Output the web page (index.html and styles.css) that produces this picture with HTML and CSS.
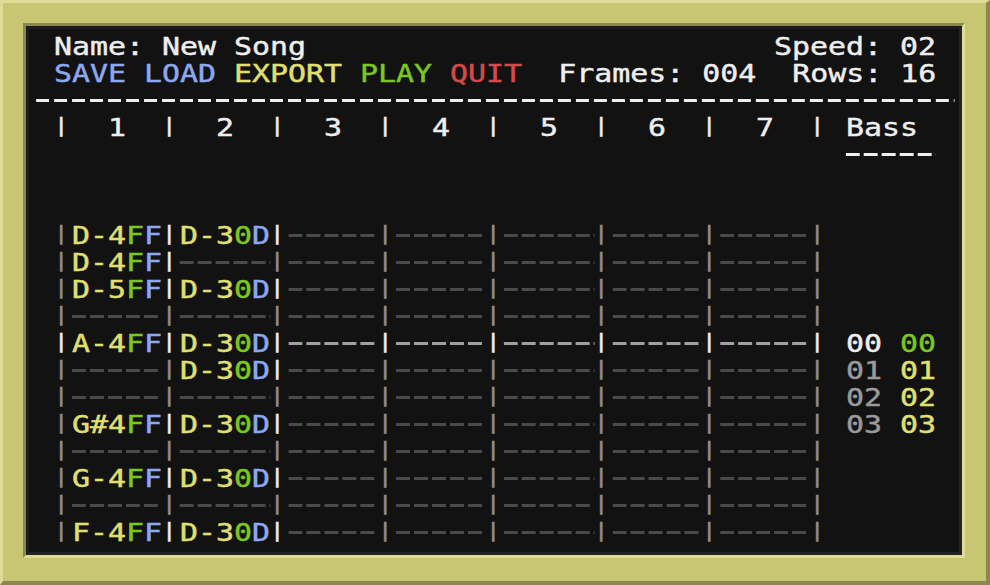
FILE: index.html
```html
<!DOCTYPE html>
<html lang="en">
<head>
<meta charset="utf-8">
<title>Tracker - New Song</title>
<link rel="stylesheet" href="styles.css">
</head>
<body>
<div class="frame">
  <div class="screen">
    <div class="term">
      <div class="text">
      <div class="line split"><span>Name: New Song</span><span>Speed: 02</span></div>
      <div class="line"><span class="blue">SAVE</span> <span class="blue">LOAD</span> <span class="yellow">EXPORT</span> <span class="green">PLAY</span> <span class="red">QUIT</span>  Frames: 004  Rows: 16</div>
      <div class="line"><span class="rule"></span></div>
      <div class="line"><span class="pipe on">|</span>  1  <span class="pipe on">|</span>  2  <span class="pipe on">|</span>  3  <span class="pipe on">|</span>  4  <span class="pipe on">|</span>  5  <span class="pipe on">|</span>  6  <span class="pipe on">|</span>  7  <span class="pipe on">|</span> Bass</div>
      <div class="line"><span class="dash w5 white-dash bass-ul"></span></div>
      <div class="line"></div>
      <div class="line"></div>

      <div class="line"><span class="pipe">|</span><span class="yellow">D-4</span><span class="green">F</span><span class="blue">F</span><span class="pipe on">|</span><span class="yellow">D-3</span><span class="green">0</span><span class="blue">D</span><span class="pipe on">|</span><span class="dash w5"></span><span class="pipe">|</span><span class="dash w5"></span><span class="pipe">|</span><span class="dash w5"></span><span class="pipe">|</span><span class="dash w5"></span><span class="pipe">|</span><span class="dash w5"></span><span class="pipe">|</span></div>

      <div class="line"><span class="pipe">|</span><span class="yellow">D-4</span><span class="green">F</span><span class="blue">F</span><span class="pipe on">|</span><span class="dash w5"></span><span class="pipe">|</span><span class="dash w5"></span><span class="pipe">|</span><span class="dash w5"></span><span class="pipe">|</span><span class="dash w5"></span><span class="pipe">|</span><span class="dash w5"></span><span class="pipe">|</span><span class="dash w5"></span><span class="pipe">|</span></div>

      <div class="line"><span class="pipe">|</span><span class="yellow">D-5</span><span class="green">F</span><span class="blue">F</span><span class="pipe on">|</span><span class="yellow">D-3</span><span class="green">0</span><span class="blue">D</span><span class="pipe on">|</span><span class="dash w5"></span><span class="pipe">|</span><span class="dash w5"></span><span class="pipe">|</span><span class="dash w5"></span><span class="pipe">|</span><span class="dash w5"></span><span class="pipe">|</span><span class="dash w5"></span><span class="pipe">|</span></div>

      <div class="line"><span class="pipe">|</span><span class="dash w5"></span><span class="pipe">|</span><span class="dash w5"></span><span class="pipe">|</span><span class="dash w5"></span><span class="pipe">|</span><span class="dash w5"></span><span class="pipe">|</span><span class="dash w5"></span><span class="pipe">|</span><span class="dash w5"></span><span class="pipe">|</span><span class="dash w5"></span><span class="pipe">|</span></div>

      <div class="line current"><span class="pipe">|</span><span class="yellow">A-4</span><span class="green">F</span><span class="blue">F</span><span class="pipe">|</span><span class="yellow">D-3</span><span class="green">0</span><span class="blue">D</span><span class="pipe">|</span><span class="dash w5"></span><span class="pipe">|</span><span class="dash w5"></span><span class="pipe">|</span><span class="dash w5"></span><span class="pipe">|</span><span class="dash w5"></span><span class="pipe">|</span><span class="dash w5"></span><span class="pipe">|</span> <span class="white">00</span> <span class="green">00</span></div>

      <div class="line"><span class="pipe">|</span><span class="dash w5"></span><span class="pipe">|</span><span class="yellow">D-3</span><span class="green">0</span><span class="blue">D</span><span class="pipe on">|</span><span class="dash w5"></span><span class="pipe">|</span><span class="dash w5"></span><span class="pipe">|</span><span class="dash w5"></span><span class="pipe">|</span><span class="dash w5"></span><span class="pipe">|</span><span class="dash w5"></span><span class="pipe">|</span> <span class="grey">01</span> <span class="yellow">01</span></div>

      <div class="line"><span class="pipe">|</span><span class="dash w5"></span><span class="pipe">|</span><span class="dash w5"></span><span class="pipe">|</span><span class="dash w5"></span><span class="pipe">|</span><span class="dash w5"></span><span class="pipe">|</span><span class="dash w5"></span><span class="pipe">|</span><span class="dash w5"></span><span class="pipe">|</span><span class="dash w5"></span><span class="pipe">|</span> <span class="grey">02</span> <span class="yellow">02</span></div>

      <div class="line"><span class="pipe">|</span><span class="yellow">G#4</span><span class="green">F</span><span class="blue">F</span><span class="pipe on">|</span><span class="yellow">D-3</span><span class="green">0</span><span class="blue">D</span><span class="pipe on">|</span><span class="dash w5"></span><span class="pipe">|</span><span class="dash w5"></span><span class="pipe">|</span><span class="dash w5"></span><span class="pipe">|</span><span class="dash w5"></span><span class="pipe">|</span><span class="dash w5"></span><span class="pipe">|</span> <span class="grey">03</span> <span class="yellow">03</span></div>

      <div class="line"><span class="pipe">|</span><span class="dash w5"></span><span class="pipe">|</span><span class="dash w5"></span><span class="pipe">|</span><span class="dash w5"></span><span class="pipe">|</span><span class="dash w5"></span><span class="pipe">|</span><span class="dash w5"></span><span class="pipe">|</span><span class="dash w5"></span><span class="pipe">|</span><span class="dash w5"></span><span class="pipe">|</span></div>

      <div class="line"><span class="pipe">|</span><span class="yellow">G-4</span><span class="green">F</span><span class="blue">F</span><span class="pipe on">|</span><span class="yellow">D-3</span><span class="green">0</span><span class="blue">D</span><span class="pipe on">|</span><span class="dash w5"></span><span class="pipe">|</span><span class="dash w5"></span><span class="pipe">|</span><span class="dash w5"></span><span class="pipe">|</span><span class="dash w5"></span><span class="pipe">|</span><span class="dash w5"></span><span class="pipe">|</span></div>

      <div class="line"><span class="pipe">|</span><span class="dash w5"></span><span class="pipe">|</span><span class="dash w5"></span><span class="pipe">|</span><span class="dash w5"></span><span class="pipe">|</span><span class="dash w5"></span><span class="pipe">|</span><span class="dash w5"></span><span class="pipe">|</span><span class="dash w5"></span><span class="pipe">|</span><span class="dash w5"></span><span class="pipe">|</span></div>

      <div class="line"><span class="pipe">|</span><span class="yellow">F-4</span><span class="green">F</span><span class="blue">F</span><span class="pipe on">|</span><span class="yellow">D-3</span><span class="green">0</span><span class="blue">D</span><span class="pipe on">|</span><span class="dash w5"></span><span class="pipe">|</span><span class="dash w5"></span><span class="pipe">|</span><span class="dash w5"></span><span class="pipe">|</span><span class="dash w5"></span><span class="pipe">|</span><span class="dash w5"></span><span class="pipe">|</span></div>
      </div>
    </div>
  </div>
</div>
</body>
</html>
```
FILE: styles.css
```css
html, body {
  margin: 0;
  padding: 0;
  background: #c8c672;
}

.frame {
  box-sizing: border-box;
  width: 990px;
  height: 585px;
  background: #c8c672;
  border-top: 3px solid #e0dc98;
  border-left: 3px solid #e0dc98;
  border-right: 4px solid #8a8850;
  border-bottom: 4px solid #8a8850;
  padding: 20px 21px 23px 20px;
}

.screen {
  box-sizing: border-box;
  width: 942px;
  height: 535px;
  border-top: 3px solid #8a8850;
  border-left: 3px solid #8a8850;
  border-right: 3px solid #e0dc98;
  border-bottom: 3px solid #e0dc98;
}

.term {
  box-sizing: border-box;
  height: 100%;
  background: #121212;
  border: 3px solid #242424;
  border-top-color: #1c1c1c;
  border-left-color: #1c1c1c;
  padding: 4px 0 0 25px;
  overflow: hidden;
}

/* one character cell before horizontal scaling: 18px / 1.19593 */
.text {
  --c: 15.051px;
  transform: scaleX(1.19593);
  transform-origin: 0 0;
  font-family: "DejaVu Sans Mono", "Liberation Mono", monospace;
  font-size: 25px;
  letter-spacing: 0;
  color: #eeeeee;
  -webkit-text-stroke: 0.45px currentColor;
}

.line {
  height: 27px;
  line-height: 27px;
  white-space: pre;
}

.split {
  display: flex;
  justify-content: space-between;
  width: calc(var(--c) * 49);
}

.blue { color: #8ca8f0; }
.yellow { color: #e0e070; }
.green { color: #7ac81c; }
.red { color: #d44a4a; }
.white { color: #eeeeee; }
.grey { color: #9a9a9a; }

.pipe {
  display: inline-block;
  vertical-align: top;
  width: var(--c);
  height: 27px;
  font-size: 20px;
  line-height: 23px;
  text-align: left;
  color: #8e8e8e;
}
.pipe.on { color: #eeeeee; }
.current .pipe { color: #eeeeee; }

.rule {
  display: inline-block;
  vertical-align: top;
  width: calc(var(--c) * 51);
  height: 27px;
  margin-left: calc(var(--c) * -1);
  background-image: linear-gradient(to right, #eeeeee 10.9px, transparent 10.9px);
  background-size: var(--c) 3px;
  background-repeat: repeat-x;
  background-position: 0 12px;
}

.dash {
  display: inline-block;
  vertical-align: top;
  height: 27px;
  background-image: linear-gradient(to right, #4a4a4a 11.7px, transparent 11.7px);
  background-size: var(--c) 3px;
  background-repeat: repeat-x;
  background-position: 0 12px;
}

.w5 { width: calc(var(--c) * 5); }

.current .dash {
  background-image: linear-gradient(to right, #a0a0a0 11.7px, transparent 11.7px);
}

.white-dash {
  background-image: linear-gradient(to right, #eeeeee 11.7px, transparent 11.7px);
}

.bass-ul {
  margin-left: calc(var(--c) * 44);
}
```
